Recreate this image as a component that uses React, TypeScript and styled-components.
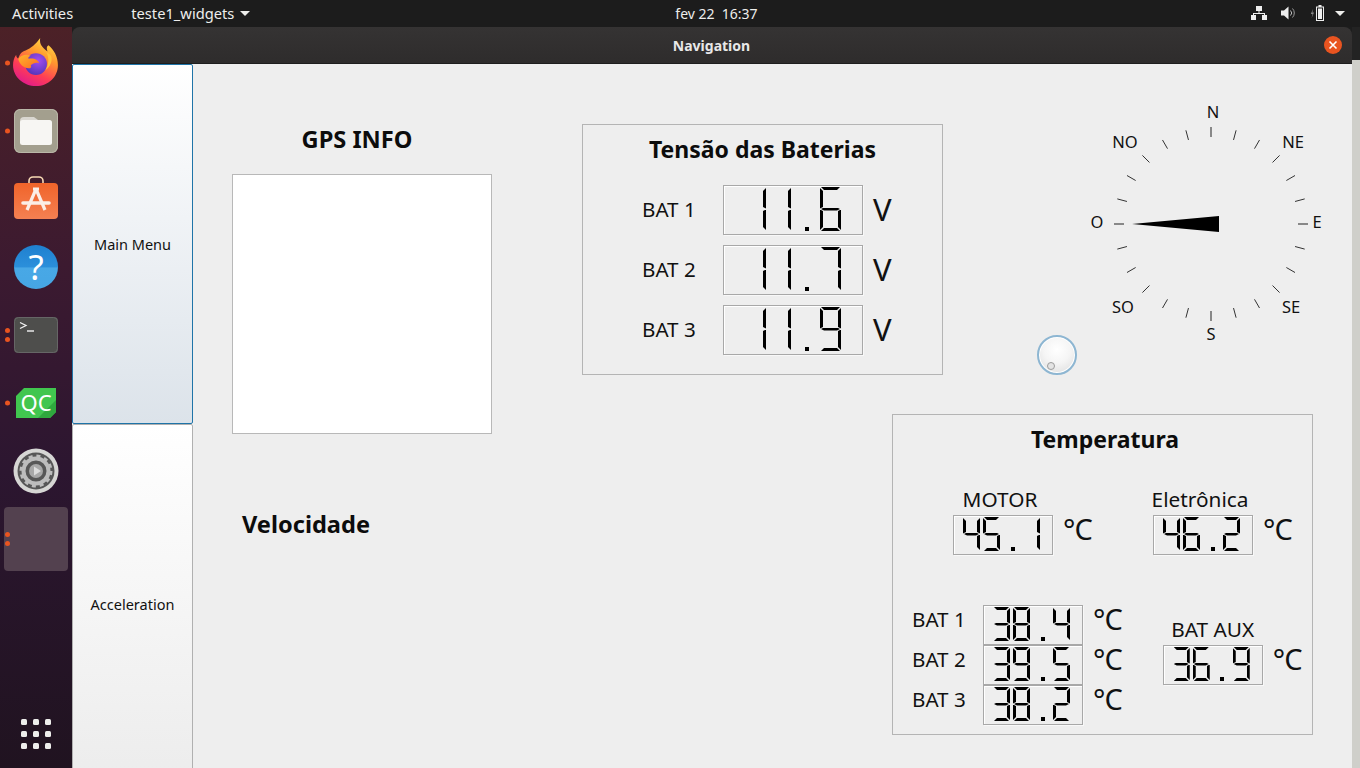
import React from "react";
import styled, { createGlobalStyle, css } from "styled-components";

const FONT = `"Noto Sans", "Open Sans", "DejaVu Sans", sans-serif`;

const Global = createGlobalStyle`
  html, body { margin: 0; padding: 0; width: 1360px; height: 768px; overflow: hidden; background: #1d1d1d; }
  #root { width: 1360px; height: 768px; }
  * { box-sizing: border-box; }
`;

const Screen = styled.div`
  width: 1360px; height: 768px; display: flex; flex-direction: column;
  font-family: ${FONT}; color: #111; overflow: hidden;
`;

/* ---------- top bar ---------- */
const TopBar = styled.header`
  flex: 0 0 27px; height: 27px; display: grid; grid-template-columns: 1fr auto 1fr; align-items: center;
  background: #1c1c1c; color: #eeeeec; font-size: 14.7px; padding: 0 15px 1px 12px;
`;
const TopLeft = styled.div`display: flex; align-items: center;`;
const AppMenu = styled.span`display: flex; align-items: center; gap: 6px; margin-left: 58px;`;
const Caret = styled.i`
  display: block; width: 0; height: 0; border-left: 5px solid transparent; border-right: 5px solid transparent;
  border-top: 5px solid #eeeeec;
`;
const Clock = styled.span`margin-left: 76px; font-size: 14px;`;
const TopRight = styled.div`
  display: flex; align-items: center; justify-content: flex-end; gap: 14px;
  & > i { margin-left: -4px; }
`;

/* ---------- desktop ---------- */
const Desktop = styled.div`flex: 1; display: flex; min-height: 0;`;
const Dock = styled.nav`
  flex: 0 0 72px; display: flex; flex-direction: column; padding-top: 2px; position: relative;
  background: linear-gradient(180deg, #4c2127 0%, #3c1a30 32%, #2c1630 60%, #201320 100%);
`;
const DockItem = styled.div`
  position: relative; flex: 0 0 68px; display: flex; align-items: center; justify-content: center;
`;
const RunDots = styled.span`
  position: absolute; left: 5px; top: 50%; transform: translateY(-50%);
  display: flex; flex-direction: column; gap: 4px;
`;
const RunDot = styled.i`display: block; width: 5px; height: 5px; border-radius: 50%; background: #e95420;`;
const ActiveTile = styled.div`width: 64px; height: 64px; border-radius: 4px; background: #53414f;`;
const AppsGrid = styled.div`
  margin-top: auto; margin-bottom: 19px; margin-left: 21px; display: grid;
  grid-template-columns: repeat(3, 6px); grid-auto-rows: 6px; gap: 6px;
`;
const AppsDot = styled.i`display: block; border-radius: 1.5px; background: #eeeeec;`;

const Win = styled.main`flex: 0 0 1280px; display: flex; flex-direction: column; min-width: 0;`;
const TitleBar = styled.div`
  flex: 0 0 37px; position: relative; display: flex; align-items: center; justify-content: center;
  background: linear-gradient(180deg, #353333, #2e2c2c); border-bottom: 1px solid #1e1e1e;
  border-radius: 8px 8px 0 0; color: #e8e8e8; font-size: 14px; font-weight: 700; padding-right: 1px;
`;
const CloseBtn = styled.span`
  position: absolute; left: 1252px; top: 9px; width: 18px; height: 18px; border-radius: 50%;
  background: #e95420; display: flex; align-items: center; justify-content: center;
`;
const Edge = styled.div`flex: 0 0 8px; display: flex; flex-direction: column;`;
const EdgeTop = styled.div`flex: 0 0 33px; background: #232323;`;
const EdgeBottom = styled.div`flex: 1; background: #cfcfca;`;

const Content = styled.div`flex: 1; display: flex; background: #eeeeee; min-height: 0; overflow: hidden;`;
const SideNav = styled.div`flex: 0 0 121px; display: flex; flex-direction: column;`;
const NavButton = styled.div<{ $active?: boolean }>`
  flex: 0 0 360px; display: flex; align-items: center; justify-content: center; font-size: 14.5px; color: #111;
  border-radius: 2px; border: 1px solid ${(p) => (p.$active ? "#1f74a8" : "#b0b0b0")};
  background: ${(p) =>
    p.$active ? "linear-gradient(180deg, #ffffff 0%, #dce3ea 100%)" : "linear-gradient(180deg, #ffffff 0%, #ececec 100%)"};
`;

const Canvas = styled.div`flex: 1; display: flex; min-width: 0;`;
const LeftColumn = styled.section`flex: 0 0 389px; padding: 60px 0 0 39px;`;
const Heading = styled.h2`
  margin: 0; font-size: 23px; line-height: 30px; font-weight: 700; color: #0c0c0c; white-space: nowrap;
`;
const GpsHeading = styled(Heading)`
  width: 260px; text-align: center; padding-right: 10px; margin-bottom: 20px; font-size: 23.6px;
`;
const GpsBox = styled.div`width: 260px; height: 260px; background: #fff; border: 1px solid #b8b8b8;`;
const SpeedHeading = styled(Heading)`margin: 75px 0 0 10px; font-size: 23.6px;`;

const RightColumn = styled.section`flex: 1; display: flex; flex-direction: column; min-width: 0;`;
const TopRow = styled.div`flex: 0 0 350px; display: flex; align-items: flex-start;`;

const GroupBox = styled.div`border: 1px solid #b4b4b4; display: flex; flex-direction: column; padding-top: 9px;`;
const BatteryBox = styled(GroupBox)`width: 361px; height: 251px; margin-top: 60px;`;
const CenterHeading = styled(Heading)<{ $shift?: number }>`
  text-align: center; padding-left: ${(p) => p.$shift ?? 0}px;
`;
const BatteryRows = styled.div`display: flex; flex-direction: column; gap: 10px; margin: 21px 0 0 59px;`;
const BatteryRow = styled.div`display: flex; align-items: center;`;
const RowLabel = styled.span<{ $w: number; $raise: number }>`
  flex: 0 0 ${(p) => p.$w}px; font-size: 20.6px; line-height: 24px; color: #111; white-space: nowrap;
  margin-bottom: ${(p) => p.$raise * 2}px;
`;
const Volt = styled.span`
  margin: 0 0 2px 10px; font-size: 31px; line-height: 40px; color: #111; white-space: nowrap;
`;
const Degrees = styled.span`
  margin: 0 0 12px 10px; font-size: 29px; line-height: 28px; letter-spacing: -1px; color: #111; white-space: nowrap;
`;

/* ---------- LCD ---------- */
const Lcd = styled.div<{ $large?: boolean }>`
  position: relative; display: flex; justify-content: flex-end; flex: none; color: #000;
  border: 1px solid #a8a8a8; box-shadow: inset 1px 1px 0 #fff, 1px 1px 0 #f8f8f8;
  ${(p) =>
    p.$large
      ? css`
          --w: 21px; --h: 44px; --t: 3px; width: 140px; height: 50px; gap: 4px; padding: 1px 21px 0 0;
        `
      : css`
          --w: 17px; --h: 34px; --t: 3px; width: 100px; height: 40px; gap: 3px; padding: 1px 12px 0 0;
        `}
`;
const LcdText = styled.span`
  position: absolute; left: 0; right: 0; top: 0; bottom: 0; display: flex; align-items: center; justify-content: center;
  font-size: 16px; color: transparent; white-space: nowrap;
`;
const Cell = styled.span`position: relative; display: block; flex: none; width: var(--w); height: var(--h);`;
const Point = styled.i`position: absolute; left: calc(50% - 1px); bottom: 0; width: 4px; height: 4px; background: #000;`;

const H = css`left: 1px; width: calc(var(--w) - 2px); height: var(--t);`;
const V = css`width: var(--t); height: calc(var(--h) / 2 - 1.5px);`;
const SEGMENTS: Record<string, ReturnType<typeof css>> = {
  a: css`${H} top: 0; clip-path: polygon(0 0, 100% 0, calc(100% - var(--t)) 100%, var(--t) 100%);`,
  d: css`${H} bottom: 0; clip-path: polygon(var(--t) 0, calc(100% - var(--t)) 0, 100% 100%, 0 100%);`,
  g: css`${H} top: calc(var(--h) / 2 - var(--t) / 2);
    clip-path: polygon(0 50%, var(--t) 0, calc(100% - var(--t)) 0, 100% 50%, calc(100% - var(--t)) 100%, var(--t) 100%);`,
  f: css`${V} left: 0; top: 1px; clip-path: polygon(0 0, 100% var(--t), 100% calc(100% - var(--t) / 2), 0 100%);`,
  e: css`${V} left: 0; bottom: 1px; clip-path: polygon(0 0, 100% calc(var(--t) / 2), 100% calc(100% - var(--t)), 0 100%);`,
  b: css`${V} right: 0; top: 1px; clip-path: polygon(100% 0, 100% 100%, 0 calc(100% - var(--t) / 2), 0 var(--t));`,
  c: css`${V} right: 0; bottom: 1px; clip-path: polygon(100% 0, 100% 100%, 0 calc(100% - var(--t)), 0 calc(var(--t) / 2));`,
};
const Segment = styled.i<{ $id: string }>`
  position: absolute; display: block; background: #000;
  ${(p) => SEGMENTS[p.$id]}
`;
const MAP: Record<string, string> = {
  "0": "abcdef", "1": "bc", "2": "abdeg", "3": "abcdg", "4": "bcfg",
  "5": "acdfg", "6": "acdefg", "7": "abc", "8": "abcdefg", "9": "abcdfg",
};
const LcdNumber = ({ value, large }: { value: string; large?: boolean }) => (
  <Lcd $large={large}>
    <LcdText>{value}</LcdText>
    {value.split("").map((c, i) => (
      <Cell key={i} aria-hidden>
        {c === "." ? <Point /> : MAP[c].split("").map((s) => <Segment key={s} $id={s} />)}
      </Cell>
    ))}
  </Lcd>
);

/* ---------- knob ---------- */
const Knob = styled.div`
  position: relative; flex: none; width: 40px; height: 40px; margin: 271px 0 0 94px; border-radius: 50%;
  background: radial-gradient(circle at 50% 35%, #ffffff 0%, #f5f5f5 45%, #dedede 92%);
  border: 2px solid #8db6d2; box-shadow: inset 0 0 0 1px #fff;
`;
const KnobMark = styled.i`
  position: absolute; left: 8px; top: 25px; width: 8px; height: 8px; border-radius: 50%;
  border: 1px solid #9c9c9c; background: #e4e4e4;
`;
const CompassWrap = styled.div`flex: none; margin: 36px 0 0 8px; width: 250px; height: 250px;`;
const CompassText = styled.text`font-family: ${FONT}; font-size: 16.5px; fill: #111; text-anchor: middle;`;

/* ---------- temperature ---------- */
const TempBox = styled(GroupBox)`width: 421px; height: 321px; margin-left: 310px;`;
const SensorsTop = styled.div`display: flex; gap: 62px; margin: 33px 0 0 60px;`;
const Sensor = styled.div`display: flex; flex-direction: column; width: 138px;`;
const SensorLabel = styled.span<{ $pad?: number; $after: number }>`
  width: 100px; padding-right: ${(p) => p.$pad ?? 0}px; font-size: 20.8px; line-height: 24px;
  margin-bottom: ${(p) => p.$after}px; color: #111; white-space: nowrap; display: flex; justify-content: center;
`;
const SensorRow = styled.div`display: flex; align-items: center;`;
const SensorsBottom = styled.div`display: flex; gap: 41px; margin: 50px 0 0 19px;`;
const BatteryTemps = styled.div`flex: 0 0 209px; display: flex; flex-direction: column;`;
const AuxSensor = styled(Sensor)`margin-top: 12px;`;

/* ---------- icons ---------- */
const Firefox = () => (
  <svg width="46" height="48" viewBox="0 0 44 46" style={{ marginTop: -2 }}>
    <defs>
      <linearGradient id="ffa" x1="0.8" y1="0" x2="0.3" y2="1">
        <stop offset="0" stopColor="#ffe14a" />
        <stop offset="0.35" stopColor="#ff9a2e" />
        <stop offset="0.7" stopColor="#ff3d55" />
        <stop offset="1" stopColor="#e01a8c" />
      </linearGradient>
      <radialGradient id="ffb" cx="0.6" cy="0.35" r="0.7">
        <stop offset="0" stopColor="#a54df0" />
        <stop offset="1" stopColor="#4f35b8" />
      </radialGradient>
      <linearGradient id="ffc" x1="0" y1="0" x2="1" y2="1">
        <stop offset="0" stopColor="#ffb52e" />
        <stop offset="1" stopColor="#ff6a20" />
      </linearGradient>
    </defs>
    <path d="M26 0c-1 6 2 9 7 13-1-3-1-5 1-6 5 4 9 11 9 19 0 11-9 20-21 20S0 37 0 26c0-4 1-7 3-10 0 2 1 3 2 4 1-4 3-7 7-8 5-2 10-6 14-12z" fill="url(#ffa)" />
    <circle cx="22" cy="25" r="10.5" fill="url(#ffb)" />
    <path d="M32 14c3 5 2 12-1 17 3-2 6-6 6-11 0-3-2-5-5-6z" fill="#ffc13a" />
    <path d="M5 20c3-4 8-5 12-3-2 1-3 2-2 3 5-1 9 1 10 4-3-1-6 0-8 2 1 2 0 3-2 3-5 0-9-4-10-9z" fill="url(#ffc)" />
  </svg>
);
const FilesIcon = () => (
  <svg width="44" height="44" viewBox="0 0 44 44">
    <rect width="44" height="44" rx="6" fill="#a39f8e" />
    <rect x=".5" y=".5" width="43" height="43" rx="6" fill="none" stroke="#bab7a8" />
    <path d="M6 12a4 4 0 0 1 4-4h10l4 3v4H6z" fill="#d9d7d0" />
    <rect x="6" y="11" width="32" height="25" rx="2.5" fill="#f7f6f3" />
  </svg>
);
const SoftwareIcon = () => (
  <svg width="44" height="46" viewBox="0 0 44 46" style={{ marginTop: -4 }}>
    <defs>
      <linearGradient id="sw" x1="0" y1="0" x2="0" y2="1">
        <stop offset="0" stopColor="#f0642a" />
        <stop offset="1" stopColor="#f58052" />
      </linearGradient>
    </defs>
    <path d="M15 10V7a4 4 0 0 1 4-4h6a4 4 0 0 1 4 4v3" fill="none" stroke="#f7d9b4" strokeWidth="1.6" />
    <rect y="9" width="44" height="36" rx="4" fill="url(#sw)" />
    <path d="M19 15h6M22 15 13 36M22 15l9 21" stroke="#fbeee6" strokeWidth="3.2" fill="none" />
    <path d="M9 29h26" stroke="#fbeee6" strokeWidth="3.6" strokeLinecap="round" />
  </svg>
);
const HelpBadge = styled.div`
  width: 44px; height: 44px; border-radius: 50%; display: flex; align-items: center; justify-content: center;
  background: linear-gradient(180deg, #1f80cf 0%, #2b8fdb 50%, #48a8e6 52%, #46a6e4 100%);
  color: #fff; font-size: 35px; font-weight: 400; line-height: 44px;
`;
const TerminalIcon = () => (
  <svg width="44" height="36" viewBox="0 0 44 36">
    <rect width="44" height="36" rx="4" fill="#4e4e4c" />
    <rect x=".5" y=".5" width="43" height="35" rx="4" fill="none" stroke="#666" />
    <path d="M6 5.5 12 8.5 6 11.5" fill="none" stroke="#f2f2f2" strokeWidth="1.3" />
    <path d="M13 14h7" stroke="#f2f2f2" strokeWidth="1.4" />
  </svg>
);
const QtIcon = () => (
  <svg width="40" height="30" viewBox="0 0 40 30">
    <path d="M8 0h32v24l-6 6H0V8z" fill="#41c64f" />
    <path d="M40 12v12l-6 6H22z" fill="#2fa83e" />
    <text x="20" y="22.5" textAnchor="middle" fontFamily={FONT} fontSize="22" fill="#fff">QC</text>
  </svg>
);
const SettingsIcon = () => (
  <svg width="46" height="46" viewBox="0 0 46 46">
    <circle cx="23" cy="23" r="22.5" fill="#d6d6d4" />
    <circle cx="23" cy="23" r="18.5" fill="#575757" />
    <circle cx="23" cy="23" r="12.5" fill="none" stroke="#bdbdbd" strokeWidth="4" />
    <circle cx="23" cy="23" r="15" fill="none" stroke="#bdbdbd" strokeWidth="3" strokeDasharray="4 3.85" />
    <circle cx="23" cy="23" r="7" fill="#a8a8a8" />
    <path d="M21 18.5 28 23l-7 4.5z" fill="#dcdcdc" />
  </svg>
);
const NetworkIcon = () => (
  <svg width="16" height="14" viewBox="0 0 16 14" fill="#eee">
    <rect x="5" y="0" width="6" height="5" />
    <rect x="0" y="9" width="5" height="5" />
    <rect x="11" y="9" width="5" height="5" />
    <path d="M7.5 5h1v2H14v2h-1V8H3v1H2V7h5.5z" />
  </svg>
);
const VolumeIcon = () => (
  <svg width="15" height="14" viewBox="0 0 15 14">
    <path d="M0 4.5h3L7.5 .5v13L3 9.5H0z" fill="#eee" />
    <path d="M9.5 4.5a3.5 3.5 0 0 1 0 5" fill="none" stroke="#bbb" strokeWidth="1" />
    <path d="M11.5 2.5a6.5 6.5 0 0 1 0 9" fill="none" stroke="#999" strokeWidth="1" />
  </svg>
);
const BatteryIcon = () => (
  <svg width="15" height="16" viewBox="0 0 15 16">
    <path d="M3 4 .8 9h1.7L1.6 13 4 7.5H2.4z" fill="#888" />
    <path d="M8.5 0h3v1.5h2.5V16H6V1.5h2.5z" fill="#eee" />
    <rect x="7" y="2.5" width="6" height="12.5" fill="#1c1c1c" />
    <rect x="8" y="3.5" width="4" height="10.5" fill="#eee" />
  </svg>
);
const CloseIcon = () => (
  <svg width="10" height="10" viewBox="0 0 10 10">
    <path d="M1.5 1.5l7 7M8.5 1.5l-7 7" stroke="#fff" strokeWidth="1.6" />
  </svg>
);

/* ---------- compass ---------- */
const CX = 126;
const CY = 124;
const ticks = Array.from({ length: 24 }, (_, i) => i * 15);
const LABELS: [string, number, number][] = [
  ["N", 128, 18], ["NE", 208, 48], ["E", 232, 128], ["SE", 206, 213],
  ["S", 126, 240], ["SO", 38, 213], ["O", 12, 128], ["NO", 40, 48],
];
const Compass = () => (
  <svg width="250" height="250" viewBox="0 0 250 250">
    {ticks.map((deg) => {
      const r = (deg * Math.PI) / 180;
      const major = deg % 90 === 0;
      const s = Math.sin(r);
      const c = Math.cos(r);
      return (
        <line
          key={deg}
          x1={CX + s * 87}
          y1={CY - c * 87}
          x2={CX + s * 97}
          y2={CY - c * 97}
          stroke={major ? "#6e6e6e" : "#333"}
          strokeWidth={major ? 1.6 : 1}
        />
      );
    })}
    {LABELS.map(([t, x, y]) => (
      <CompassText key={t} x={x} y={y}>{t}</CompassText>
    ))}
    <path d={`M${CX - 79} ${CY} L${CX + 8} ${CY - 8} V${CY + 8} Z`} fill="#000" />
  </svg>
);

const BATTERIES: [string, string][] = [["BAT 1", "11.6"], ["BAT 2", "11.7"], ["BAT 3", "11.9"]];
const TEMPS: [string, string][] = [["BAT 1", "38.4"], ["BAT 2", "39.5"], ["BAT 3", "38.2"]];

const DOCK: [React.ReactNode, number][] = [
  [<Firefox />, 1],
  [<FilesIcon />, 1],
  [<SoftwareIcon />, 0],
  [<HelpBadge>?</HelpBadge>, 0],
  [<TerminalIcon />, 2],
  [<QtIcon />, 1],
  [<SettingsIcon />, 0],
  [<ActiveTile />, 2],
];

export default function App() {
  return (
    <Screen>
      <Global />
      <TopBar>
        <TopLeft>
          <span>Activities</span>
          <AppMenu>teste1_widgets <Caret /></AppMenu>
        </TopLeft>
        <Clock>fev 22&nbsp; 16:37</Clock>
        <TopRight>
          <NetworkIcon />
          <VolumeIcon />
          <BatteryIcon />
          <Caret />
        </TopRight>
      </TopBar>
      <Desktop>
        <Dock>
          {DOCK.map(([icon, dots], i) => (
            <DockItem key={i}>
              {dots > 0 && (
                <RunDots>
                  {Array.from({ length: dots }, (_, d) => <RunDot key={d} />)}
                </RunDots>
              )}
              {icon}
            </DockItem>
          ))}
          <AppsGrid>
            {Array.from({ length: 9 }, (_, i) => <AppsDot key={i} />)}
          </AppsGrid>
        </Dock>
        <Win>
          <TitleBar>
            Navigation
            <CloseBtn><CloseIcon /></CloseBtn>
          </TitleBar>
          <Content>
            <SideNav>
              <NavButton $active>Main Menu</NavButton>
              <NavButton>Acceleration</NavButton>
            </SideNav>
            <Canvas>
              <LeftColumn>
                <GpsHeading>GPS INFO</GpsHeading>
                <GpsBox />
                <SpeedHeading>Velocidade</SpeedHeading>
              </LeftColumn>
              <RightColumn>
                <TopRow>
                  <BatteryBox>
                    <CenterHeading>Tensão das Baterias</CenterHeading>
                    <BatteryRows>
                      {BATTERIES.map(([n, v]) => (
                        <BatteryRow key={n}>
                          <RowLabel $w={81} $raise={1}>{n}</RowLabel>
                          <LcdNumber value={v} large />
                          <Volt>V</Volt>
                        </BatteryRow>
                      ))}
                    </BatteryRows>
                  </BatteryBox>
                  <Knob><KnobMark /></Knob>
                  <CompassWrap><Compass /></CompassWrap>
                </TopRow>
                <TempBox>
                  <CenterHeading $shift={5}>Temperatura</CenterHeading>
                  <SensorsTop>
                    <Sensor>
                      <SensorLabel $pad={6} $after={4}>MOTOR</SensorLabel>
                      <SensorRow><LcdNumber value="45.1" /><Degrees>°C</Degrees></SensorRow>
                    </Sensor>
                    <Sensor>
                      <SensorLabel $pad={6} $after={4}>Eletrônica</SensorLabel>
                      <SensorRow><LcdNumber value="46.2" /><Degrees>°C</Degrees></SensorRow>
                    </Sensor>
                  </SensorsTop>
                  <SensorsBottom>
                    <BatteryTemps>
                      {TEMPS.map(([n, v]) => (
                        <SensorRow key={n}>
                          <RowLabel $w={71} $raise={6}>{n}</RowLabel>
                          <LcdNumber value={v} />
                          <Degrees>°C</Degrees>
                        </SensorRow>
                      ))}
                    </BatteryTemps>
                    <AuxSensor>
                      <SensorLabel $after={4}>BAT AUX</SensorLabel>
                      <SensorRow><LcdNumber value="36.9" /><Degrees>°C</Degrees></SensorRow>
                    </AuxSensor>
                  </SensorsBottom>
                </TempBox>
              </RightColumn>
            </Canvas>
          </Content>
        </Win>
        <Edge>
          <EdgeTop />
          <EdgeBottom />
        </Edge>
      </Desktop>
    </Screen>
  );
}
